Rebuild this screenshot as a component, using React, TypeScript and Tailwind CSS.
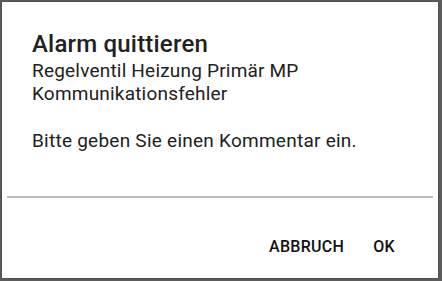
export default function App() {
  return (
    <div className="w-[442px] h-[281px] bg-[#5c5c5c] pl-[2px] pt-[2px] overflow-hidden" style={{ fontFamily: "Roboto, 'Noto Sans', sans-serif" }}>
      <div className="w-[436px] h-[276px] bg-white flex flex-col shadow-[0_0_2px_rgba(0,0,0,0.4)]">
        {/* Header */}
        <div className="pl-[30px] pt-[28px] text-[#212121]">
          <h2 className="text-[24px] leading-[28px] font-medium tracking-[0.2px]">Alarm quittieren</h2>
          <p className="mt-[1px] text-[19px] leading-[23px] tracking-[0.2px]">
            Regelventil Heizung Primär MP
            <br />
            Kommunikationsfehler
          </p>
          <p className="mt-[24px] text-[19px] leading-[23px] tracking-[0.25px]">Bitte geben Sie einen Kommentar ein.</p>
        </div>

        {/* Input line */}
        <div className="mt-[44px] mx-[5px] h-[2px] bg-[#bcbcbc]" />

        {/* Actions */}
        <div className="mt-[39px] flex justify-end gap-[29px] pr-[43px] text-[16px] leading-[20px] font-medium tracking-[0.3px] text-[#111]">
          <button>ABBRUCH</button>
          <button>OK</button>
        </div>
      </div>
    </div>
  );
}
